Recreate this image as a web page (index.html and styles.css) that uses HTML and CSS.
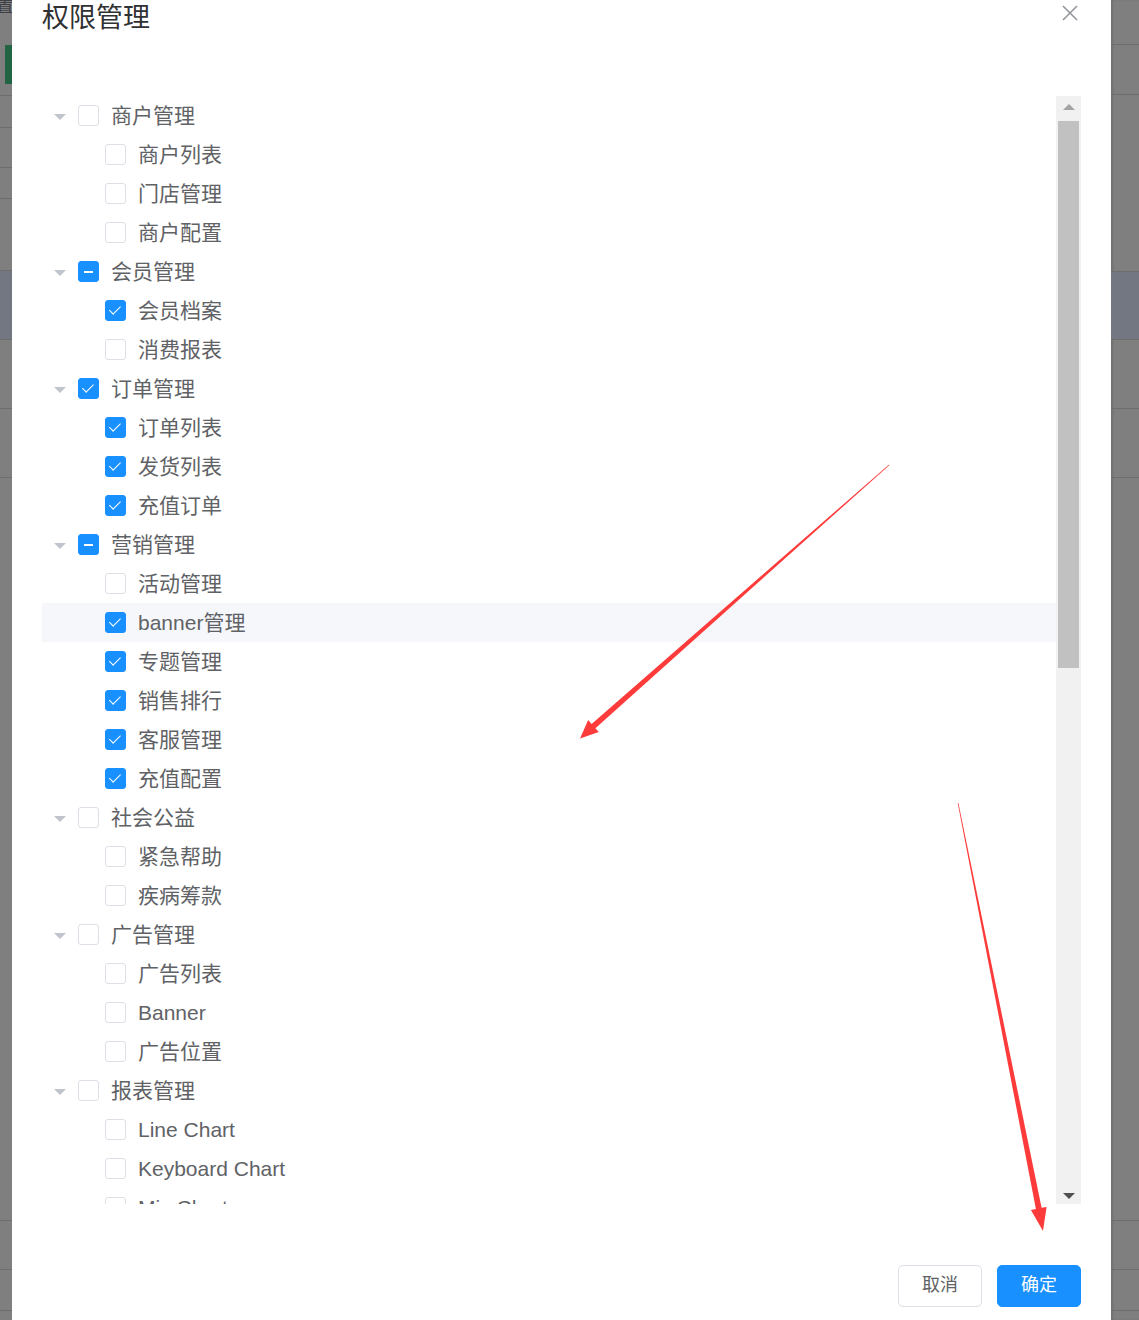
FILE: index.html
```html
<!DOCTYPE html>
<html lang="zh-CN">
<head>
    <meta charset="UTF-8">
    <meta name="viewport" content="width=device-width, initial-scale=1.0">
    <title>权限管理</title>
    <link rel="stylesheet" href="styles.css">
</head>
<body>
    <div class="page">
        <!-- page behind the mask, left edge -->
        <div class="side side-left">
            <div class="cell cell-top">
                <span class="side-text">置</span>
                <div class="green-tab"></div>
            </div>
            <div class="cell" style="height: 31px"></div>
            <div class="cell" style="height: 39px"></div>
            <div class="cell" style="height: 30px"></div>
            <div class="cell" style="height: 71px"></div>
            <div class="cell band" style="height: 68px"></div>
            <div class="cell" style="height: 68px"></div>
            <div class="cell" style="height: 68px"></div>
            <div class="cell" style="height: 742px"></div>
            <div class="cell" style="height: 48px"></div>
            <div class="cell" style="height: 40px"></div>
        </div>

        <div class="dialog">
            <div class="dialog-header">
                <span class="dialog-title">权限管理</span>
                <button class="dialog-close">
                    <svg width="16" height="16" viewBox="0 0 16 16"><path d="M1 1 L15 15 M15 1 L1 15" stroke="#909399" stroke-width="1.5" fill="none"/></svg>
                </button>
            </div>

            <div class="dialog-body">
                <div class="tree-scroll">
                    <div class="tree">
                        <div class="tree-node"><span class="caret"></span><span class="checkbox"></span><span class="label">商户管理</span></div>
                        <div class="tree-node child"><span class="caret leaf"></span><span class="checkbox"></span><span class="label">商户列表</span></div>
                        <div class="tree-node child"><span class="caret leaf"></span><span class="checkbox"></span><span class="label">门店管理</span></div>
                        <div class="tree-node child"><span class="caret leaf"></span><span class="checkbox"></span><span class="label">商户配置</span></div>

                        <div class="tree-node"><span class="caret"></span><span class="checkbox is-indeterminate"></span><span class="label">会员管理</span></div>
                        <div class="tree-node child"><span class="caret leaf"></span><span class="checkbox is-checked"></span><span class="label">会员档案</span></div>
                        <div class="tree-node child"><span class="caret leaf"></span><span class="checkbox"></span><span class="label">消费报表</span></div>

                        <div class="tree-node"><span class="caret"></span><span class="checkbox is-checked"></span><span class="label">订单管理</span></div>
                        <div class="tree-node child"><span class="caret leaf"></span><span class="checkbox is-checked"></span><span class="label">订单列表</span></div>
                        <div class="tree-node child"><span class="caret leaf"></span><span class="checkbox is-checked"></span><span class="label">发货列表</span></div>
                        <div class="tree-node child"><span class="caret leaf"></span><span class="checkbox is-checked"></span><span class="label">充值订单</span></div>

                        <div class="tree-node"><span class="caret"></span><span class="checkbox is-indeterminate"></span><span class="label">营销管理</span></div>
                        <div class="tree-node child"><span class="caret leaf"></span><span class="checkbox"></span><span class="label">活动管理</span></div>
                        <div class="tree-node child is-hover"><span class="caret leaf"></span><span class="checkbox is-checked"></span><span class="label">banner管理</span></div>
                        <div class="tree-node child"><span class="caret leaf"></span><span class="checkbox is-checked"></span><span class="label">专题管理</span></div>
                        <div class="tree-node child"><span class="caret leaf"></span><span class="checkbox is-checked"></span><span class="label">销售排行</span></div>
                        <div class="tree-node child"><span class="caret leaf"></span><span class="checkbox is-checked"></span><span class="label">客服管理</span></div>
                        <div class="tree-node child"><span class="caret leaf"></span><span class="checkbox is-checked"></span><span class="label">充值配置</span></div>

                        <div class="tree-node"><span class="caret"></span><span class="checkbox"></span><span class="label">社会公益</span></div>
                        <div class="tree-node child"><span class="caret leaf"></span><span class="checkbox"></span><span class="label">紧急帮助</span></div>
                        <div class="tree-node child"><span class="caret leaf"></span><span class="checkbox"></span><span class="label">疾病筹款</span></div>

                        <div class="tree-node"><span class="caret"></span><span class="checkbox"></span><span class="label">广告管理</span></div>
                        <div class="tree-node child"><span class="caret leaf"></span><span class="checkbox"></span><span class="label">广告列表</span></div>
                        <div class="tree-node child"><span class="caret leaf"></span><span class="checkbox"></span><span class="label">Banner</span></div>
                        <div class="tree-node child"><span class="caret leaf"></span><span class="checkbox"></span><span class="label">广告位置</span></div>

                        <div class="tree-node"><span class="caret"></span><span class="checkbox"></span><span class="label">报表管理</span></div>
                        <div class="tree-node child"><span class="caret leaf"></span><span class="checkbox"></span><span class="label">Line Chart</span></div>
                        <div class="tree-node child"><span class="caret leaf"></span><span class="checkbox"></span><span class="label">Keyboard Chart</span></div>
                        <div class="tree-node child"><span class="caret leaf"></span><span class="checkbox"></span><span class="label">Mix Chart</span></div>
                    </div>
                </div>

                <!-- classic scrollbar of the tree box -->
                <div class="scrollbar">
                    <div class="scroll-btn"><span class="arrow-up"></span></div>
                    <div class="scroll-thumb"></div>
                    <div class="scroll-rest"></div>
                    <div class="scroll-btn"><span class="arrow-down"></span></div>
                </div>
            </div>

            <div class="dialog-footer">
                <button class="btn">取消</button>
                <button class="btn btn-primary">确定</button>
            </div>
        </div>

        <!-- page behind the mask, right edge -->
        <div class="side side-right">
            <div class="cell" style="height: 44px"></div>
            <div class="cell" style="height: 49px"></div>
            <div class="cell" style="height: 176px"></div>
            <div class="cell band" style="height: 67px"></div>
            <div class="cell" style="height: 68px"></div>
            <div class="cell" style="height: 68px"></div>
            <div class="cell" style="height: 742px"></div>
            <div class="cell" style="height: 48px"></div>
            <div class="cell" style="height: 40px"></div>
        </div>
    </div>

    <!-- red annotation arrows drawn over the screenshot -->
    <svg class="annotations" width="1139" height="1320" viewBox="0 0 1139 1320">
        <polygon fill="#fd3b3b" points="889.3,465.2 595.4,728.2 598.8,732.1 580,738.5 588.2,720.1 591.6,724.0 888.8,464.7"/>
        <polygon fill="#fd3b3b" points="958.4,802.9 1041.6,1207.8 1046.6,1206.9 1043,1231 1030.9,1210.0 1035.9,1209.0 957.7,803.1"/>
    </svg>
</body>
</html>
```

FILE: styles.css
```css
body { margin: 0; background-color: #7f7f7f; font-family: "Liberation Sans", "Noto Sans CJK SC", sans-serif; height: 1320px; overflow: hidden; }
.page { display: flex; height: 1320px; }

/* the page under the grey mask */
.side { display: flex; flex-direction: column; overflow: hidden; }
.side-left { width: 12px; }
.side-right { width: 28px; box-shadow: inset 2px 0 2px rgba(0, 0, 0, 0.12); }
.cell { border-bottom: 1px solid #6d6d6d; flex: none; }
.cell-top { height: 95px; }
.band { background-color: #737781; }
.side-text { display: block; margin-left: -4px; margin-top: -3px; font-size: 18px; line-height: 18px; color: #3d3f45; }
.green-tab { width: 7px; height: 39px; margin: 30px 0 0 5px; background-color: #236444; }

/* dialog */
.dialog { width: 1099px; background-color: #fff; display: flex; flex-direction: column; }
.dialog-header { height: 96px; display: flex; justify-content: space-between; align-items: flex-start; padding: 0 33px 0 30px; box-sizing: border-box; }
.dialog-title { font-size: 27px; line-height: 36px; color: #303133; }
.dialog-close { border: none; background: none; padding: 0; margin-top: 5px; width: 16px; height: 16px; cursor: pointer; }
.dialog-body { display: flex; padding: 0 30px; height: 1108px; }

/* tree */
.tree-scroll { flex: 1; overflow: hidden; }
.tree-node { height: 39px; display: flex; align-items: center; color: #606266; font-size: 21px; }
.tree-node.child { padding-left: 27px; }
.tree-node.is-hover { background-color: #f5f7fa; }
.caret { width: 36px; height: 39px; display: flex; align-items: center; justify-content: center; }
.caret::before { content: ""; border-left: 6px solid transparent; border-right: 6px solid transparent; border-top: 6px solid #c0c4cc; margin-top: 2px; }
.caret.leaf::before { border-top-color: transparent; }
.checkbox { width: 21px; height: 21px; box-sizing: border-box; border: 1px solid #dcdfe6; border-radius: 3px; background-color: #fff; margin-right: 12px; position: relative; flex: none; }
.checkbox.is-checked, .checkbox.is-indeterminate { background-color: #1890ff; border-color: #1890ff; }
.checkbox.is-checked::after { content: ""; position: absolute; left: 6px; top: 2px; width: 4.5px; height: 10px; border: 1.5px solid #fff; border-top: none; border-left: none; transform: rotate(45deg); }
.checkbox.is-indeterminate::before { content: ""; position: absolute; left: 5px; right: 5px; top: 9px; height: 2px; background-color: #fff; }
.label { line-height: 39px; margin-top: -1px; }

/* scrollbar */
.scrollbar { width: 25px; background-color: #f1f1f1; display: flex; flex-direction: column; }
.scroll-btn { height: 25px; display: flex; align-items: center; justify-content: center; flex: none; }
.arrow-up { border-left: 6px solid transparent; border-right: 6px solid transparent; border-bottom: 6px solid #a3a3a3; margin-top: -4px; }
.arrow-down { border-left: 6px solid transparent; border-right: 6px solid transparent; border-top: 6px solid #505050; margin-top: 8px; }
.scroll-thumb { height: 547px; margin: 0 2px; background-color: #c1c1c1; flex: none; }
.scroll-rest { flex: 1; }

/* footer buttons */
.dialog-footer { display: flex; justify-content: flex-end; gap: 15px; padding: 61px 30px 0; }
.btn { height: 42px; padding: 0 23px 3px; line-height: 1; font-size: 18px; font-family: "Liberation Sans", "Noto Sans CJK SC", sans-serif; border: 1px solid #dcdfe6; border-radius: 5px; background-color: #fff; color: #606266; cursor: pointer; }
.btn-primary { background-color: #1890ff; border-color: #1890ff; color: #fff; }

.annotations { position: absolute; top: 0; left: 0; pointer-events: none; }
```
